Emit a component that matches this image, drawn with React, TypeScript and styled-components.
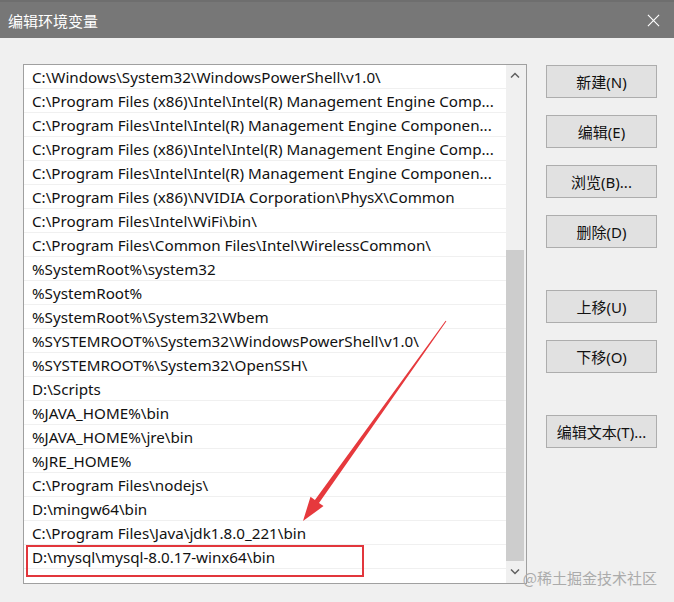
import React from "react";
import styled, { createGlobalStyle } from "styled-components";

const PATHS = [
  "C:\\Windows\\System32\\WindowsPowerShell\\v1.0\\",
  "C:\\Program Files (x86)\\Intel\\Intel(R) Management Engine Comp...",
  "C:\\Program Files\\Intel\\Intel(R) Management Engine Componen...",
  "C:\\Program Files (x86)\\Intel\\Intel(R) Management Engine Comp...",
  "C:\\Program Files\\Intel\\Intel(R) Management Engine Componen...",
  "C:\\Program Files (x86)\\NVIDIA Corporation\\PhysX\\Common",
  "C:\\Program Files\\Intel\\WiFi\\bin\\",
  "C:\\Program Files\\Common Files\\Intel\\WirelessCommon\\",
  "%SystemRoot%\\system32",
  "%SystemRoot%",
  "%SystemRoot%\\System32\\Wbem",
  "%SYSTEMROOT%\\System32\\WindowsPowerShell\\v1.0\\",
  "%SYSTEMROOT%\\System32\\OpenSSH\\",
  "D:\\Scripts",
  "%JAVA_HOME%\\bin",
  "%JAVA_HOME%\\jre\\bin",
  "%JRE_HOME%",
  "C:\\Program Files\\nodejs\\",
  "D:\\mingw64\\bin",
  "C:\\Program Files\\Java\\jdk1.8.0_221\\bin",
  "D:\\mysql\\mysql-8.0.17-winx64\\bin",
  "",
];

const HIGHLIGHT = "D:\\mysql\\mysql-8.0.17-winx64\\bin";

const BUTTON_GROUPS = [
  ["新建(N)", "编辑(E)", "浏览(B)...", "删除(D)"],
  ["上移(U)", "下移(O)"],
  ["编辑文本(T)..."],
];

const GlobalStyle = createGlobalStyle`
  html, body {
    margin: 0;
    padding: 0;
    background: #f0f0f0;
  }
  * {
    box-sizing: border-box;
  }
`;

export default function App() {
  return (
    <>
      <GlobalStyle />
      <Window>
        <TitleBar>
          <Title>编辑环境变量</Title>
          <CloseIcon viewBox="0 0 14 14">
            <path d="M1 1 L13 13 M13 1 L1 13" />
          </CloseIcon>
        </TitleBar>
        <Body>
          <ListBox>
            <Rows>
              {PATHS.map((p, i) => (
                <Row key={i}>
                  {p}
                  {p === HIGHLIGHT && <RedBox />}
                </Row>
              ))}
            </Rows>
            <ScrollBar>
              <ScrollArrow $top>
                <Chevron viewBox="0 0 10 6">
                  <polyline points="1,5.5 5,1.5 9,5.5" />
                </Chevron>
              </ScrollArrow>
              <Track>
                <Thumb />
              </Track>
              <ScrollArrow>
                <Chevron viewBox="0 0 10 6">
                  <polyline points="1,0.5 5,4.5 9,0.5" />
                </Chevron>
              </ScrollArrow>
            </ScrollBar>
            <Arrow viewBox="0 0 504 520">
              <polygon points="422.4,256.3 295,437.9 299.5,441.1 279,456 286.5,431.8 290.9,435 421.6,255.7" />
            </Arrow>
          </ListBox>
          <Buttons>
            {BUTTON_GROUPS.map((group, gi) => (
              <ButtonGroup key={gi}>
                {group.map((label) => (
                  <Button key={label}>{label}</Button>
                ))}
              </ButtonGroup>
            ))}
          </Buttons>
        </Body>
        <Watermark>@稀土掘金技术社区</Watermark>
      </Window>
    </>
  );
}

const FONT = `"Noto Sans", "Noto Sans CJK SC", sans-serif`;

const Window = styled.div`
  position: relative;
  width: 674px;
  height: 602px;
  display: flex;
  flex-direction: column;
  background: #f0f0f0;
  font-family: ${FONT};
  overflow: hidden;
`;

const TitleBar = styled.div`
  height: 38px;
  flex: none;
  display: flex;
  align-items: center;
  justify-content: space-between;
  padding: 0 14px 0 8px;
  background: #777777;
  border-top: 2px solid #6e6e6e;
`;

const Title = styled.span`
  color: #ffffff;
  font-size: 15px;
  font-family: "Noto Sans CJK SC", sans-serif;
`;

const CloseIcon = styled.svg`
  width: 13px;
  height: 13px;
  stroke: #ffffff;
  stroke-width: 1.2;
  fill: none;
`;

const Body = styled.div`
  flex: 1;
  display: flex;
  align-items: flex-start;
  gap: 19px;
  padding: 26px 0 0 23px;
`;

const ListBox = styled.div`
  position: relative;
  width: 504px;
  height: 520px;
  display: flex;
  background: #ffffff;
  border: 1px solid #a0a0a0;
`;

const Rows = styled.div`
  flex: 1;
  min-width: 0;
  overflow: hidden;
`;

const Row = styled.div`
  position: relative;
  height: 24px;
  padding: 1px 0 0 8px;
  border-bottom: 1px solid #f0f0f0;
  font-size: 15.2px;
  line-height: 22px;
  color: #111111;
  white-space: nowrap;
`;

const RedBox = styled.div`
  position: absolute;
  left: 2px;
  top: 0;
  width: 338px;
  height: 32px;
  border: 2.5px solid #e2363c;
  z-index: 2;
`;

const ScrollBar = styled.div`
  width: 20px;
  flex: none;
  display: flex;
  flex-direction: column;
  background: #f0f0f0;
`;

const ScrollArrow = styled.div<{ $top?: boolean }>`
  height: ${(p) => (p.$top ? "20px" : "22px")};
  display: flex;
  align-items: center;
  justify-content: center;
  padding-right: 2px;
`;

const Chevron = styled.svg`
  width: 10px;
  height: 6px;
  fill: none;
  stroke: #606060;
  stroke-width: 1.5;
`;

const Track = styled.div`
  flex: 1;
  padding-top: 165px;
`;

const Thumb = styled.div`
  width: 18px;
  height: 311px;
  background: #cdcdcd;
`;

const Arrow = styled.svg`
  position: absolute;
  left: 0;
  top: 0;
  width: 504px;
  height: 520px;
  fill: #e6393d;
  pointer-events: none;
  z-index: 3;
`;

const Buttons = styled.div`
  display: flex;
  flex-direction: column;
  gap: 42px;
  margin-top: 1px;
`;

const ButtonGroup = styled.div`
  display: flex;
  flex-direction: column;
  gap: 17px;
`;

const Button = styled.button`
  width: 111px;
  height: 33px;
  padding: 0;
  background: #e1e1e1;
  border: 1px solid #adadad;
  font-family: ${FONT};
  font-size: 15px;
  color: #111111;
`;

const Watermark = styled.div`
  position: absolute;
  right: 17px;
  bottom: 14px;
  font-family: "Noto Sans CJK SC", sans-serif;
  font-size: 15px;
  color: #ababab;
`;
